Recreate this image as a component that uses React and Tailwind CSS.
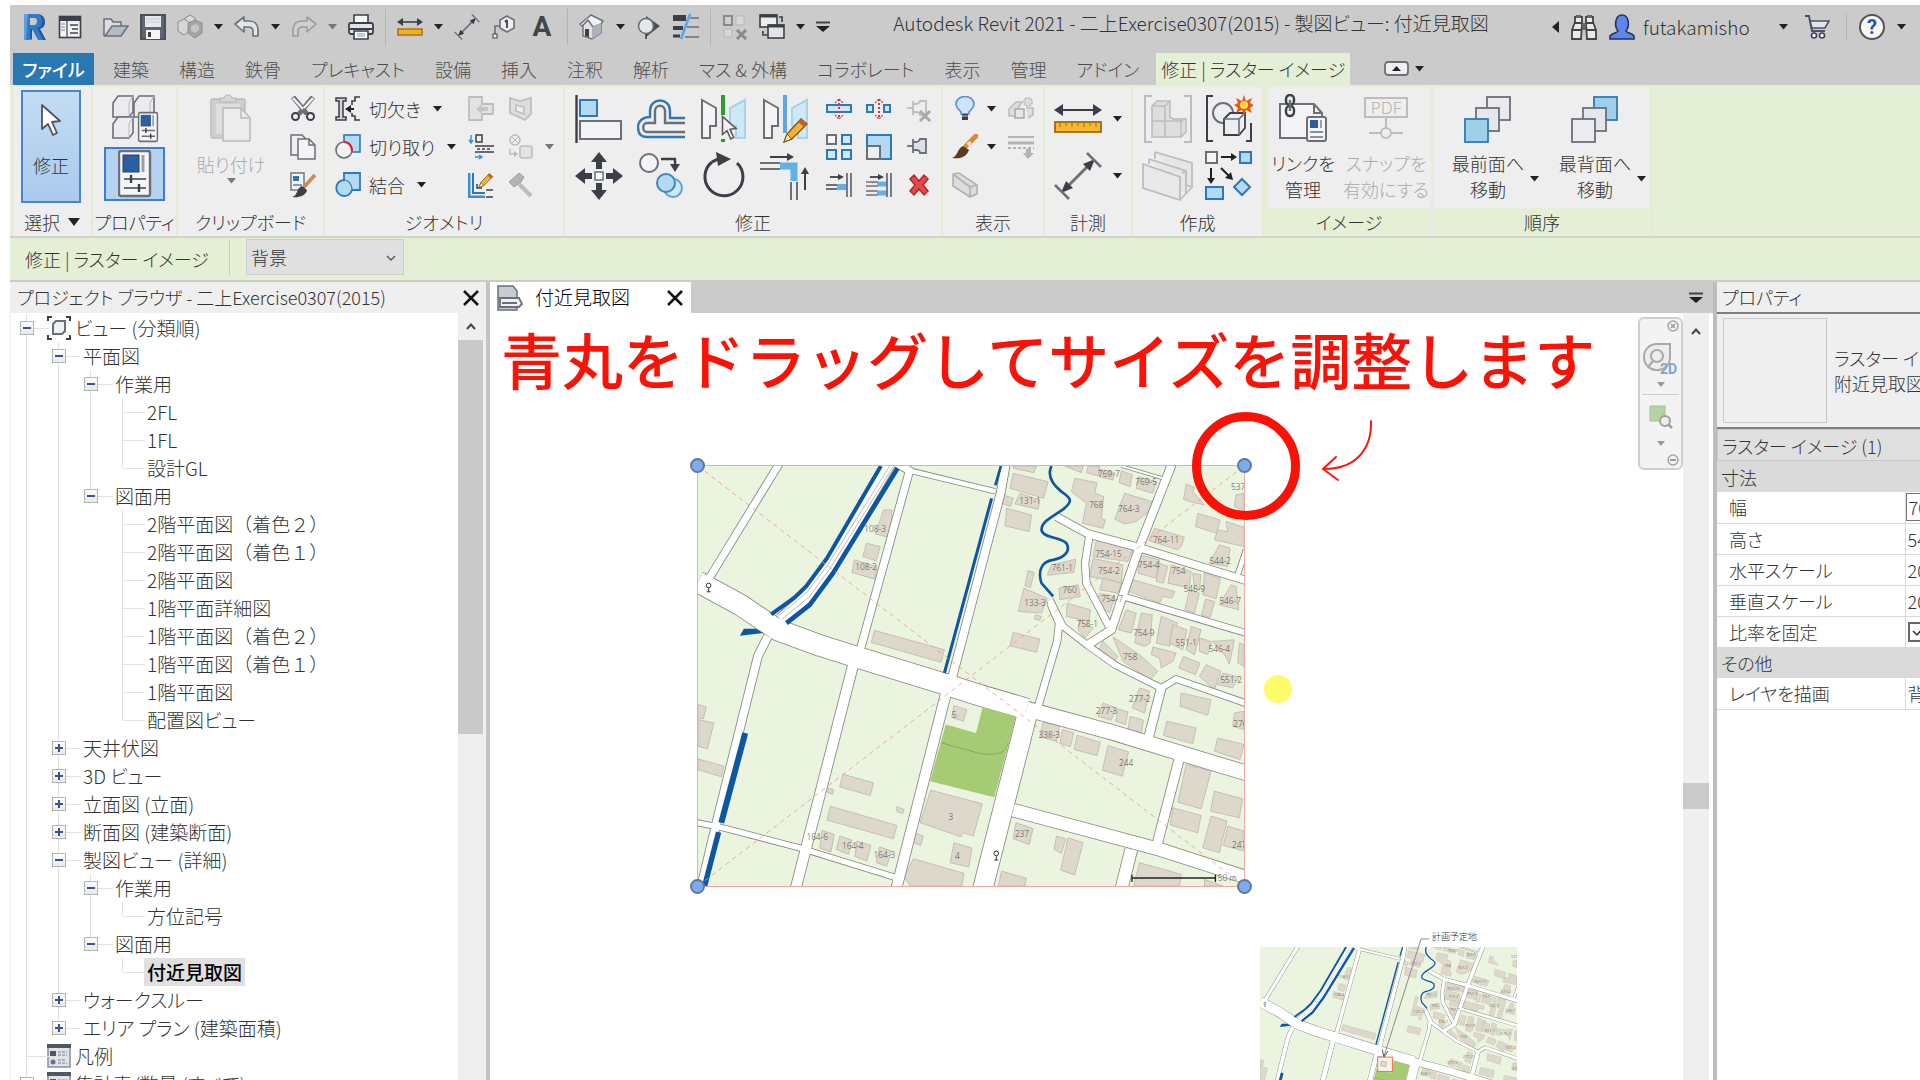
import { useState } from "react";
import clsx from "clsx";

const DARK = "#3b3f48";
const MID = "#6b6f78";
const OFF = "#bdbdbd";
const BLUE = "#2f78b8";
const SKY = "#b3daf2";

function Svg({ w, h, children }){
  return (
      <svg width={w} height={h} viewBox={"0 0 " + w + " " + h} fill="none" className="shrink-0" aria-hidden="true">{children}</svg>
  )
}

function Caret({ off }){
  return <Svg w={9} h={6}><path d="M0 0H9L4.5 5.5Z" fill={off ? "#777" : "#222"} /></Svg>
}

/* ---------- quick access icons ---------- */

function LogoIcon(){
  return (
      <Svg w={24} h={28}>
          <path d="M3 1H13C19 1 22 4 22 9C22 13 20 15 17 16L23 27H16L11 17H9V27L3 24Z" fill="#1d5a9e" />
          <path d="M1 1H12C17 1 19 4 19 8C19 12 17 14 14 15L20 27H15L9 16H7V27H1Z" fill="#2e7cc7" />
          <path d="M7 5H11C13 5 14 6 14 8C14 10 13 12 11 12H7Z" fill="#cbcbcb" />
          <path d="M1 1H5L3 27H1Z" fill="#5aa0dd" />
      </Svg>
  )
}

function WindowIcon(){
  return (
      <Svg w={24} h={24}>
          <rect x="1.5" y="1.5" width="21" height="21" fill="#f2f2f2" stroke={DARK} strokeWidth="1.6" />
          <path d="M1 1H23V6H1Z" fill={DARK} />
          <path d="M9 6V22" stroke={MID} strokeWidth="1.6" />
          <path d="M3 9H7M3 12H7M3 15H7" stroke="#889" strokeWidth="1" />
          <path d="M12 10H20M14 14H20M12 18H20" stroke={MID} strokeWidth="2" />
      </Svg>
  )
}

function OpenIcon(){
  return (
      <Svg w={26} h={22}>
          <path d="M1 20V3H8L10 6H18V10" fill="#dcdde0" stroke={MID} strokeWidth="1.5" />
          <path d="M2 20L9 10H25L18 20Z" fill="#b4bac6" stroke={MID} strokeWidth="1.5" />
      </Svg>
  )
}

function SaveIcon(){
  return (
      <Svg w={26} h={26}>
          <rect x="1" y="1" width="24" height="24" fill="#5f6471" stroke="#4b4f5a" strokeWidth="2" />
          <rect x="5" y="2" width="16" height="11" fill="#e8e9ec" />
          <path d="M6 5H20M6 8H20" stroke="#c5c8ce" />
          <rect x="6" y="16" width="14" height="9" fill="#f5f5f5" />
          <rect x="8" y="18" width="3" height="5" fill={DARK} />
      </Svg>
  )
}

function CubesIcon(){
  return (
      <Svg w={26} h={26}>
          <path d="M8 4L13 1L18 4V9L13 12L8 9Z" fill="#dadada" stroke="#8d8d8d" />
          <path d="M1 8L7 5L13 9V17L7 21L1 17Z" fill="#d6d6d6" stroke="#8d8d8d" />
          <path d="M11 9L18 6L25 9V19L18 24L11 19Z" fill="#a5a5a5" stroke="#8d8d8d" />
          <path d="M14 12L19 10L22 12V16L18 19L14 17Z" fill="#c5c5c5" />
      </Svg>
  )
}

function ArrowBackIcon({ off }){
  return (
      <Svg w={26} h={22}>
          <path d={off
              ? "M25 8L16 1V5H11C5 5 2 9 2 14V20H7V15C7 12 9 11 12 11H16V16Z"
              : "M1 8L10 1V5H15C21 5 24 9 24 14V20H19V15C19 12 17 11 14 11H10V16Z"}
              fill={off ? "#cfcfcf" : "#e4e5e8"} stroke={off ? "#9c9c9c" : MID} strokeWidth="1.6" strokeLinejoin="round" />
      </Svg>
  )
}

function PrintIcon(){
  return (
      <Svg w={26} h={26}>
          <path d="M6 10V1H20V10" fill="#f5f5f5" stroke={DARK} strokeWidth="1.6" />
          <rect x="1" y="9" width="24" height="11" rx="2" fill="#e2e3e6" stroke={DARK} strokeWidth="1.8" />
          <path d="M2 15H24" stroke={DARK} strokeWidth="2" />
          <path d="M6 17H20V25H6Z" fill="#fff" stroke={DARK} strokeWidth="1.6" />
          <path d="M9 20H17M9 22H17" stroke="#6aa0d8" />
      </Svg>
  )
}

function MeasureIcon(){
  return (
      <Svg w={26} h={20}>
          <path d="M3 5H23" stroke={DARK} strokeWidth="1.6" />
          <path d="M0 5L6 1V9ZM26 5L20 1V9Z" fill={DARK} />
          <rect x="1" y="12" width="24" height="6" fill="#f2b01e" stroke="#a87410" strokeWidth="1.5" />
      </Svg>
  )
}

function DimIcon({ w, h }){
  return (
      <svg width={w} height={h} viewBox="0 0 48 48" fill="none" aria-hidden="true">
          <path d="M10 38L38 10" stroke={MID} strokeWidth="3" />
          <path d="M7 41L12 29L19 36ZM41 7L36 19L29 12Z" fill={DARK} />
          <path d="M1 33L15 47M33 1L47 15" stroke={MID} strokeWidth="2.5" />
      </svg>
  )
}

function TagIcon(){
  return (
      <Svg w={26} h={26}>
          <path d="M16 2L23 6V14L16 18L9 14V6Z" fill="#eee" stroke={MID} strokeWidth="1.6" />
          <path d="M16 6V14M14 8L16 6" stroke={DARK} strokeWidth="1.8" />
          <path d="M9 12H4V20" stroke={MID} strokeWidth="1.6" />
          <rect x="2" y="20" width="4" height="4" fill="#eee" stroke={DARK} />
      </Svg>
  )
}

function HomeIcon(){
  return (
      <Svg w={26} h={26}>
          <path d="M4 11V22L13 25L22 19V8L13 2Z" fill="#dfe0e4" stroke={MID} strokeWidth="1.4" />
          <path d="M1 10L12 1L24 7L22 10L14 13L9 6L3 12Z" fill="#f2f2f4" stroke={MID} strokeWidth="1.4" strokeLinejoin="round" />
          <path d="M13 13V25L22 19V9Z" fill="#aeb2bb" />
          <path d="M6 15H10V23L6 22Z" fill={DARK} />
      </Svg>
  )
}

function SectionIcon(){
  return (
      <Svg w={26} h={26}>
          <path d="M10 2L24 12L10 23Z" fill="#4a4e58" />
          <circle cx="10" cy="12" r="7.5" fill="#e6e7e9" stroke={MID} strokeWidth="1.6" />
          <path d="M10 20V25" stroke={DARK} strokeWidth="1.5" />
      </Svg>
  )
}

function ThinLinesIcon(){
  return (
      <Svg w={26} h={26}>
          <path d="M0 4H13" stroke={DARK} strokeWidth="6" />
          <path d="M0 14H10" stroke={DARK} strokeWidth="4" />
          <path d="M0 22H7" stroke={DARK} strokeWidth="3" />
          <path d="M17 4H26M14 13H26M12 23H26" stroke={MID} strokeWidth="1.6" />
          <path d="M17 0L8 25" stroke="#5ca6e6" strokeWidth="2.5" />
      </Svg>
  )
}

function CloseViewsIcon(){
  return (
      <Svg w={26} h={26}>
          <path d="M2 2H10V11H2Z" fill="#cfcfcf" stroke="#8a8a8a" strokeWidth="2" />
          <path d="M14 2H22V11H14ZM2 15H10V23H2Z" fill="#d8d8d8" stroke="#b5b5b5" />
          <path d="M15 16L24 25M24 16L15 25" stroke="#8a8a8a" strokeWidth="3" />
      </Svg>
  )
}

function SwitchViewsIcon(){
  return (
      <Svg w={26} h={26}>
          <rect x="1" y="1" width="17" height="12" fill="#ececec" stroke={DARK} strokeWidth="1.6" />
          <path d="M1 2H18" stroke={DARK} strokeWidth="3" />
          <rect x="9" y="11" width="16" height="13" fill="#e2e3e8" stroke={DARK} strokeWidth="1.6" />
          <path d="M9 12H25" stroke={DARK} strokeWidth="3" />
          <path d="M20 3H23V8M4 17V21H8" stroke={DARK} strokeWidth="1.6" />
      </Svg>
  )
}

function MenuDownIcon(){
  return <Svg w={14} h={12}><path d="M0 1.5H14" stroke="#444" strokeWidth="2" /><path d="M0 5H14L7 11Z" fill="#222" /></Svg>
}

function BinocularsIcon(){
  return (
      <Svg w={26} h={26}>
          <path d="M4 3H11V10L10 25H1V16L4 8Z" fill="#e9e9e9" stroke="#444" strokeWidth="1.8" />
          <path d="M15 3H22V8L25 16V25H16L15 10Z" fill="#e9e9e9" stroke="#444" strokeWidth="1.8" />
          <path d="M5 1H10V4H5ZM16 1H21V4H16ZM11 9H15V16H11Z" fill="#666" />
          <path d="M1 16H10M16 16H25M4 9H11M15 9H22" stroke="#444" strokeWidth="1.8" />
      </Svg>
  )
}

function UserIcon(){
  return (
      <Svg w={26} h={26}>
          <path d="M1 25V22C3 19 8 19 9 17C5 12 6 1 13 1C20 1 21 12 17 17C18 19 23 19 25 22V25Z" fill="#5c86e8" stroke="#25335e" strokeWidth="1.6" />
      </Svg>
  )
}

function CartIcon(){
  return (
      <Svg w={26} h={26}>
          <path d="M1 2H5L8 17H21" stroke="#4c5064" strokeWidth="2" />
          <path d="M6 7H25L21 14H8Z" fill="#e2e4ec" stroke="#4c5064" strokeWidth="1.6" />
          <circle cx="10" cy="21.5" r="2.5" fill="#fff" stroke="#3b3f6b" strokeWidth="1.6" />
          <circle cx="18" cy="21.5" r="2.5" fill="#fff" stroke="#3b3f6b" strokeWidth="1.6" />
      </Svg>
  )
}

/* ---------- ribbon icons ---------- */

function PointerIcon({ w = 22, h = 34 }){
  return (
      <svg width={w} height={h} viewBox="0 0 22 34" fill="none" aria-hidden="true">
          <path d="M2 2V26L8 21L13 32L17 30L12 19L20 18Z" fill="#fff" stroke="#4f5560" strokeWidth="1.8" strokeLinejoin="round" />
      </svg>
  )
}

function Sheet({ x, y, w, h }){
  return (
      <g transform={"translate(" + x + " " + y + ") scale(" + w / 33 + " " + h / 47 + ")"}>
          <rect x="1" y="1" width="31" height="45" rx="2" fill="#f6f6f7" stroke={MID} strokeWidth="2.4" />
          <rect x="5" y="5" width="16" height="17" fill="#2c5f9e" stroke="#23456f" strokeWidth="1" />
          <path d="M25 5V22" stroke="#9aa0aa" strokeWidth="3" />
          <path d="M6 29H28M6 38H28" stroke={MID} strokeWidth="2" />
          <path d="M13 25V33M21 34V42" stroke={DARK} strokeWidth="2.4" />
      </g>
  )
}

function TypePropsIcon(){
  return (
      <Svg w={48} h={48}>
          {[[2, 4], [23, 4], [2, 25]].map(([x, y]) => (
              <g key={x + "-" + y}>
                  <path d={`M${x} ${y + 4}L${x + 5} ${y - 3}H${x + 20}V${y + 13}L${x + 16} ${y + 18}H${x}Z`} fill="#ececef" stroke={MID} strokeWidth="1.6" />
                  <path d={`M${x + 16} ${y + 18}V${y + 4}L${x + 20} ${y - 3}`} stroke="#b8bbc2" />
              </g>
          ))}
          <Sheet x={27} y={17} w={20} h={30} />
      </Svg>
  )
}

function PropsIcon(){
  return <Svg w={34} h={48}><Sheet x={0} y={0} w={33} h={47} /></Svg>
}

function PasteIcon(){
  return (
      <Svg w={42} h={48}>
          <rect x="1" y="5" width="34" height="39" rx="2" fill="#cfcfcf" stroke="#bcbcbc" strokeWidth="1.5" />
          <rect x="6" y="10" width="24" height="30" fill="#dedede" />
          <path d="M10 8V4H14C14 0 22 0 22 4H26V8Z" fill="#d6d6d6" stroke="#b4b4b4" />
          <path d="M13 14H31L40 24V47H13Z" fill="#ececec" stroke="#b9b9b9" strokeWidth="1.5" />
          <path d="M31 14V24H40" stroke="#b9b9b9" strokeWidth="1.5" />
      </Svg>
  )
}

function CutIcon(){
  return (
      <Svg w={26} h={26}>
          <path d="M3 1L17 18M23 1L9 18" stroke={MID} strokeWidth="5" />
          <path d="M3 2L13 13M23 2L14 12" stroke="#f3f3f3" strokeWidth="2.4" />
          <circle cx="5.5" cy="20.5" r="3.5" stroke={DARK} strokeWidth="2" />
          <circle cx="20.5" cy="20.5" r="3.5" stroke={DARK} strokeWidth="2" />
      </Svg>
  )
}

function CopyClipIcon(){
  return (
      <Svg w={26} h={26}>
          <path d="M1 1H12L15 4V21H1Z" fill="#f0f0f0" stroke={MID} strokeWidth="1.5" />
          <path d="M8 5H19L25 11V25H8Z" fill="#f4f4f5" stroke={MID} strokeWidth="1.5" />
          <path d="M19 5V11H25" stroke={MID} strokeWidth="1.5" />
      </Svg>
  )
}

function MatchIcon(){
  return (
      <Svg w={26} h={26}>
          <rect x="1" y="1" width="13" height="17" fill="#f4f4f4" stroke={MID} strokeWidth="1.4" />
          <rect x="3" y="4" width="6" height="5" fill={BLUE} />
          <path d="M3 13H12" stroke={MID} strokeWidth="1.4" />
          <path d="M25 3L14 15" stroke="#c98b4a" strokeWidth="3.5" />
          <path d="M2 25C8 24 6 16 12 14L17 18C16 24 8 26 2 25Z" fill={DARK} />
      </Svg>
  )
}

function CopeIcon(){
  return (
      <Svg w={26} h={26}>
          <path d="M1 2H11V5H8V21H11V24H1V21H4V5H1Z" fill="#d5d6da" stroke={DARK} strokeWidth="1.5" />
          <path d="M25 1H20V5H17V9M17 17V20H20V24H25" stroke={DARK} strokeWidth="1.6" />
          <path d="M10 13L16 9V17Z" fill="#222" /><path d="M15 13H19" stroke="#222" strokeWidth="2" />
      </Svg>
  )
}

function CutGeoIcon(){
  return (
      <Svg w={26} h={26}>
          <rect x="9" y="1" width="16" height="17" fill={SKY} stroke={BLUE} strokeWidth="1.6" />
          <circle cx="9" cy="16" r="8" fill="#f2f2f2" stroke={MID} strokeWidth="1.6" />
          <path d="M9 8C14 8 17 12 17 17" stroke="#e02020" strokeWidth="2" />
      </Svg>
  )
}

function JoinIcon(){
  return (
      <Svg w={26} h={26}>
          <path d="M9 1H25V18H17A8 8 0 1 1 9 8Z" fill={SKY} stroke={BLUE} strokeWidth="1.8" />
          <path d="M9 8C13 8 17 12 17 17" stroke={BLUE} strokeWidth="1.2" />
      </Svg>
  )
}

function BeamJoinIcon(){
  return <Svg w={26} h={26}><path d="M1 1H14V8H25V18H14V24H1Z" fill="#e3e3e3" stroke={OFF} strokeWidth="1.8" /><path d="M8 13L14 8V11H20V15H14V18Z" fill="#c4c4c4" /></Svg>
}

function WallOpeningIcon(){
  return <Svg w={26} h={26}><path d="M2 2L12 5L23 2V18L17 24L2 17Z" fill="#dedede" stroke={OFF} strokeWidth="1.8" /><path d="M8 9L16 11V18L8 15Z" fill="#eee" stroke={OFF} strokeWidth="1.5" /></Svg>
}

function SplitFaceIcon(){
  return (
      <Svg w={26} h={26}>
          <path d="M3 1V8M1 6L3 9L5 6M7 23H13M11 21L14 23L11 25" stroke="#3f8fe0" strokeWidth="1.5" />
          <rect x="8" y="1" width="6" height="7" stroke={DARK} strokeWidth="1.5" />
          <path d="M7 12H26M7 18H26" stroke={DARK} strokeWidth="1.6" />
          <path d="M9 15H24" stroke={DARK} strokeWidth="1.5" strokeDasharray="3 2" />
      </Svg>
  )
}

function PaintOffIcon(){
  return (
      <Svg w={26} h={26}>
          <circle cx="7" cy="6" r="5" stroke={OFF} strokeWidth="1.6" /><path d="M4 3L10 9M10 3L4 9" stroke={OFF} />
          <rect x="12" y="12" width="12" height="12" rx="2" fill="#e3e3e3" stroke={OFF} strokeWidth="1.6" />
          <path d="M2 15V20H8M6 18L9 20L6 22" stroke={OFF} strokeWidth="1.6" />
      </Svg>
  )
}

function Pencil({ x = 0, y = 0, s = 1 }){
  return (
      <g transform={`translate(${x} ${y}) scale(${s})`}>
          <path d="M0 24L3 16L17 1L23 6L8 21Z" fill="#f4b233" stroke="#7a5417" strokeWidth="1.3" />
          <path d="M0 24L3 16L8 21Z" fill="#f3dfbd" stroke="#7a5417" strokeWidth="1" />
          <path d="M14 4L20 9L23 6L17 1Z" fill="#c0602b" />
      </g>
  )
}

function EditProfileIcon(){
  return (
      <Svg w={26} h={26}>
          <path d="M1 1V25H17" stroke="#3f8fd0" strokeWidth="3" />
          <path d="M5 1V21H17" stroke={BLUE} strokeWidth="2" />
          <path d="M9 12V16H14M18 18H25M18 25H25" stroke={DARK} strokeWidth="1.5" />
          <Pencil x={11} y={1} s={0.6} />
      </Svg>
  )
}

function HammerOffIcon(){
  return <Svg w={26} h={26}><path d="M1 10L11 1L16 5L13 10L6 15Z" fill="#b5b5b5" stroke="#9e9e9e" /><path d="M11 12L23 24" stroke={OFF} strokeWidth="4" /></Svg>
}

function AlignIcon(){
  return (
      <Svg w={48} h={48}>
          <path d="M1.5 0V48" stroke={DARK} strokeWidth="2.4" />
          <rect x="5" y="5" width="17" height="16" fill={SKY} stroke={BLUE} strokeWidth="2" />
          <rect x="5" y="26" width="41" height="18" fill="#f4f4f6" stroke={MID} strokeWidth="2" />
      </Svg>
  )
}

function OffsetIcon(){
  return (
      <Svg w={48} h={48}>
          <path d="M48 23H33V16C33 2 13 2 13 16V22C6 22 1 26 1 32C1 38 4 42 10 42H48" stroke={BLUE} strokeWidth="2.4" />
          <path d="M48 28H28V16C28 9 18 9 18 16V28H10C5 28 5 37 10 37H48" stroke={MID} strokeWidth="2.4" fill="#f2f2f2" />
      </Svg>
  )
}

function MirrorIcon({ draw }){
  return (
      <Svg w={48} h={48}>
          <path d="M3 5L17 13V31H11V43H3Z" fill="#f4f4f6" stroke={MID} strokeWidth="2" />
          <path d="M46 5L31 13V31H37V43H46Z" fill="#cfe8f5" stroke="#a9d2ea" strokeWidth="2" />
          {draw
              ? <><path d="M24 0V38" stroke="#5ca6e6" strokeWidth="4" /><Pencil x={23} y={23} /></>
              : <><path d="M24 0V20M24 44V47" stroke="#2f9a2f" strokeWidth="4" /><g transform="translate(22 20) scale(0.75)"><path d="M2 2V26L8 21L13 32L17 30L12 19L20 18Z" fill="#f0f0f0" stroke="#555" strokeWidth="2" /></g></>}
      </Svg>
  )
}

function MoveIcon(){
  return (
      <Svg w={48} h={48}>
          <path d="M24 0L32 10H27V17H21V10H16ZM24 48L32 38H27V31H21V38H16ZM0 24L10 16V21H17V27H10V32ZM48 24L38 16V21H31V27H38V32Z" fill={DARK} />
          <rect x="20" y="20" width="8" height="8" fill="#fff" stroke={MID} strokeWidth="1.5" />
      </Svg>
  )
}

function CopyObjIcon(){
  return (
      <Svg w={48} h={48}>
          <circle cx="12" cy="11" r="9" fill="#f4f4f6" stroke={MID} strokeWidth="2" />
          <path d="M24 7H38V12" stroke={DARK} strokeWidth="2.4" /><path d="M33 12H43L38 20Z" fill={DARK} />
          <circle cx="36" cy="36" r="9" fill="#cfe8f7" stroke="#5ea2d2" strokeWidth="2" />
          <circle cx="29" cy="31" r="9" fill={SKY} stroke="#3f85bb" strokeWidth="2" />
      </Svg>
  )
}

function RotateIcon(){
  return (
      <Svg w={48} h={48}>
          <path d="M13 10A19 19 0 1 0 38 11" stroke={DARK} strokeWidth="3" />
          <path d="M13 10C16 8 19 7 22 7" stroke={DARK} strokeWidth="3" />
          <path d="M17 0L32 7L19 14Z" fill={DARK} />
      </Svg>
  )
}

function TrimIcon(){
  return (
      <Svg w={50} h={48}>
          <path d="M10 5H30" stroke={DARK} strokeWidth="2" /><path d="M27 1L34 5L27 9Z" fill={DARK} />
          <path d="M0 11H20M0 17H20M31 30V48M37 30V48" stroke={MID} strokeWidth="2" />
          <path d="M20 14H34V29" stroke="#62b0ea" strokeWidth="7" />
          <path d="M45 38V18" stroke={DARK} strokeWidth="2" /><path d="M41 22L45 15L49 22Z" fill={DARK} />
      </Svg>
  )
}

function SplitIcon({ gap }){
  return (
      <Svg w={26} h={26}>
          {gap
              ? <path d="M1 9H7V16H1ZM18 9H24V16H18Z" fill="#cfe8f7" stroke={BLUE} strokeWidth="2" />
              : <path d="M1 9H25V16H1Z" fill="#cfe8f7" stroke={BLUE} strokeWidth="2" />}
          <path d="M13 3V23" stroke="#cf3a3a" strokeWidth="2" strokeDasharray="2 2" />
          <path d="M9 7L13 3L17 7M9 19L13 23L17 19" stroke="#cf3a3a" strokeWidth="1.2" strokeDasharray="2 1" />
      </Svg>
  )
}

function PinIcon({ off }){
  var c = off ? OFF : MID;
  return (
      <Svg w={26} h={26}>
          <path d="M1 12H7" stroke={c} strokeWidth="1.8" />
          <path d="M7 5V19M7 8H10C12 8 14 6 14 5H20V19H14C14 17 12 16 10 16H7" fill={off ? "#eee" : "#e0e1e4"} stroke={c} strokeWidth="1.8" />
          {off && <path d="M14 15L24 25M24 15L14 25" stroke="#a8a8a8" strokeWidth="3" />}
      </Svg>
  )
}

function ArrayIcon(){
  return (
      <Svg w={26} h={26}>
          <rect x="1" y="1" width="9" height="9" fill="#f4f4f4" stroke={MID} strokeWidth="2" />
          <path d="M16 1H25V10H16ZM1 16H10V25H1ZM16 16H25V25H16Z" fill="#cfe8f7" stroke={BLUE} strokeWidth="2" />
      </Svg>
  )
}

function ScaleIcon(){
  return (
      <Svg w={26} h={26}>
          <rect x="1" y="1" width="24" height="24" fill={SKY} stroke={BLUE} strokeWidth="2" />
          <rect x="1" y="12" width="13" height="13" fill="#eee" stroke={MID} strokeWidth="2" />
      </Svg>
  )
}

function ExtendIcon({ multi }){
  return (
      <Svg w={26} h={26}>
          <path d="M4 5H14" stroke={DARK} strokeWidth="1.8" /><path d="M12 2L18 5L12 8Z" fill={DARK} />
          {multi
              ? <><path d="M0 10H12M0 14H12M0 19H12M0 23H12" stroke={MID} strokeWidth="1.6" /><path d="M11 12H21M11 21H21" stroke="#62b0ea" strokeWidth="5" /></>
              : <><path d="M0 13H12M0 17H12" stroke={MID} strokeWidth="1.8" /><path d="M11 15H21" stroke="#62b0ea" strokeWidth="6" /></>}
          <path d="M21 1V25M25 1V25" stroke={MID} strokeWidth="1.8" />
      </Svg>
  )
}

function DeleteIcon(){
  return <Svg w={26} h={26}><path d="M4 7L8 3L13 9L18 3L22 7L17 13L22 19L18 23L13 17L8 23L4 19L9 13Z" fill="#e5484d" stroke="#b3262b" strokeWidth="1.5" /></Svg>
}

function BulbIcon(){
  return (
      <Svg w={26} h={26}>
          <path d="M9 16C6 13 4 11 4 8A9 7.500 0 0 1 22 8C22 11 20 13 17 16V18H9Z" fill="#cfe3fb" stroke="#5b8fd0" strokeWidth="1.6" />
          <path d="M10 18H16V24H10Z" fill={DARK} /><path d="M10 20H16" stroke="#bbb" />
      </Svg>
  )
}

function BrushIcon(){
  return (
      <Svg w={26} h={26}>
          <path d="M24 2L14 12" stroke="#d98a3d" strokeWidth="5" strokeLinecap="round" />
          <path d="M16 8L19 12" stroke="#ddd" strokeWidth="4" />
          <path d="M0 24C6 22 5 15 11 12L17 16C14 24 7 25 0 24Z" fill="#5d3a22" />
      </Svg>
  )
}

function BoxOffIcon(){
  return <Svg w={28} h={26}><path d="M2 2L8 1L26 13V22L19 25L2 14ZM2 2L19 15V25M19 15L26 13" fill="#dcdcdc" stroke="#b2b2b2" strokeWidth="1.6" /></Svg>
}

function DisplaceOffIcon(){
  return (
      <Svg w={26} h={26}>
          <circle cx="20" cy="6" r="4" fill="#ddd" stroke={OFF} strokeWidth="2" strokeDasharray="2 1" />
          <path d="M1 13L8 6H14L10 12V20H1ZM18 12H25V19L20 22" fill="#ddd" stroke={OFF} strokeWidth="1.6" />
          <rect x="7" y="13" width="9" height="9" fill="#e6e6e6" stroke="#acacac" strokeWidth="1.6" />
      </Svg>
  )
}

function LineworkOffIcon(){
  return (
      <Svg w={26} h={26}>
          <path d="M0 3H26" stroke="#b4b4b4" strokeWidth="2" /><path d="M0 9H26" stroke="#b4b4b4" strokeWidth="3" />
          <path d="M0 14H26" stroke="#b4b4b4" strokeWidth="2" strokeDasharray="3 2" />
          <path d="M18 15H23V19H26L20 25L15 19H18Z" fill="#b4b4b4" />
      </Svg>
  )
}

function RulerIcon(){
  return (
      <Svg w={48} h={30}>
          <path d="M6 6H42" stroke={DARK} strokeWidth="2" />
          <path d="M0 6L9 0V12ZM48 6L39 0V12Z" fill={DARK} />
          <rect x="1" y="18" width="46" height="10" fill="#f7b92b" stroke="#9c6b10" strokeWidth="1.8" />
          <path d="M6 19V23M12 19V22M18 19V23M24 19V22M30 19V23M36 19V22M42 19V23" stroke="#9c6b10" />
      </Svg>
  )
}

function GroupOffIcon(){
  return (
      <Svg w={48} h={48}>
          <path d="M8 1H1V47H8M40 1H47V47H40" stroke={OFF} strokeWidth="2" />
          <path d="M8 11L13 6H26V22L29 24H42V37L37 42H8Z" fill="#dedede" stroke={OFF} strokeWidth="1.6" />
          <path d="M8 11H21V42M21 11L26 6M8 26H37V42M37 26L42 23" stroke={OFF} strokeWidth="1.6" />
      </Svg>
  )
}

function CreateGroupIcon(){
  return (
      <Svg w={48} h={48}>
          <path d="M8 1H2V46H8M41 46H46V28" stroke={DARK} strokeWidth="2" />
          <circle cx="18" cy="18" r="10" fill="#eceef2" stroke={MID} strokeWidth="2" />
          <path d="M19 24L25 18H40V33L34 40H19Z" fill="#eceef2" stroke={DARK} strokeWidth="1.8" />
          <path d="M19 24H34V40M34 24L40 18" stroke={MID} strokeWidth="1.6" />
          <path d="M39 0L41 6L47 3L45 8L49 10L45 13L47 18L41 15L39 20L37 15L31 18L33 13L29 10L33 8L31 3L37 6Z" fill="#e5591b" />
          <circle cx="39" cy="10" r="4" fill="#ffd84a" />
      </Svg>
  )
}

function AssemblyOffIcon(){
  return (
      <Svg w={52} h={50}>
          <path d="M13 1L50 12V36L44 34M7 8L44 20V43" fill="#e6e6e6" stroke={OFF} strokeWidth="1.8" />
          <path d="M13 1V8M7 8V13M44 20L40 22" stroke={OFF} strokeWidth="1.8" />
          <path d="M1 13L38 26V49L1 37Z" fill="#e9e9e9" stroke={OFF} strokeWidth="1.8" />
          <path d="M38 49L50 36" stroke={OFF} strokeWidth="1.8" />
      </Svg>
  )
}

function SimilarIcon(){
  return (
      <Svg w={48} h={50}>
          <rect x="1" y="1" width="11" height="11" fill="#f4f4f4" stroke={MID} strokeWidth="2" />
          <rect x="35" y="1" width="11" height="11" fill={SKY} stroke={BLUE} strokeWidth="2" />
          <rect x="1" y="36" width="17" height="12" fill={SKY} stroke={BLUE} strokeWidth="2" />
          <path d="M37 28L45 36L37 44L29 36Z" fill={SKY} stroke={BLUE} strokeWidth="2" />
          <path d="M16 6H27M6 17V28M16 17L24 25" stroke="#222" strokeWidth="2" />
          <path d="M26 2L32 6L26 10ZM2 27L6 33L10 27ZM28 29L26 21L20 27Z" fill="#222" />
      </Svg>
  )
}

function LinkIcon(){
  return (
      <Svg w={48} h={48}>
          <path d="M1 10H35L43 19V44H1Z" fill="#f4f4f6" stroke={MID} strokeWidth="2" />
          <path d="M35 10V19H43" stroke={MID} strokeWidth="2" />
          <rect x="7" y="1" width="8" height="10" rx="4" stroke={DARK} strokeWidth="2.4" />
          <rect x="7" y="12" width="8" height="10" rx="4" stroke={DARK} strokeWidth="2.4" />
          <path d="M11 6V17" stroke={MID} strokeWidth="2.4" />
          <rect x="28" y="23" width="19" height="24" rx="2" fill="#f6f6f7" stroke={MID} strokeWidth="2" />
          <rect x="31" y="26" width="8" height="8" fill="#2c5f9e" /><path d="M42 26V34" stroke="#9aa0aa" strokeWidth="2" />
          <path d="M31 38H44M31 43H44" stroke={MID} strokeWidth="1.4" />
      </Svg>
  )
}

function PdfIcon(){
  return (
      <Svg w={44} h={46}>
          <rect x="1" y="4" width="42" height="19" stroke={OFF} strokeWidth="2" />
          <text x="22" y="20" textAnchor="middle" fontSize="17" fill="#b3b3b3" fontFamily="Noto Sans">PDF</text>
          <path d="M22 23V34M5 39H17M27 39H39" stroke={OFF} strokeWidth="2" />
          <circle cx="22" cy="39" r="5" stroke={OFF} strokeWidth="2" />
      </Svg>
  )
}

function OrderIcon({ front }){
  return (
      <Svg w={48} h={48}>
          <rect x="23" y="1" width="23" height="23" fill={front ? "#e9e9ee" : "#9fd0ea"} stroke={front ? MID : BLUE} strokeWidth="1.8" />
          <rect x="12" y="12" width="23" height="23" fill="#e6e7ed" stroke={MID} strokeWidth="1.8" />
          <rect x="1" y="23" width="23" height="23" fill={front ? "#9fd0ea" : "#ebebf0"} stroke={front ? BLUE : MID} strokeWidth="1.8" />
      </Svg>
  )
}

/* ---------- title bar ---------- */

function Tool({ label, className, children }){
  return <button type="button" aria-label={label} className={clsx("flex shrink-0 items-center justify-center", className)}>{children}</button>
}

function Rule(){
  return <span className="h-9 w-px shrink-0 bg-[#b4b4b4]" />
}

function TitleBar(){
  return (
      <header className="flex h-12 items-center bg-[#cbcbcb] pr-[14px] pb-1 pl-[13px]">
          <div className="flex items-center gap-[11px]">
              <Tool label="Revit"><LogoIcon /></Tool>
              <Tool label="ホーム"><WindowIcon /></Tool>
              <Tool label="開く" className="ml-[10px]"><OpenIcon /></Tool>
              <Tool label="上書き保存"><SaveIcon /></Tool>
              <Tool label="同期"><CubesIcon /></Tool>
              <Tool label="同期メニュー"><Caret /></Tool>
              <Tool label="元に戻す"><ArrowBackIcon /></Tool>
              <Tool label="元に戻すメニュー"><Caret /></Tool>
              <Tool label="やり直し"><ArrowBackIcon off /></Tool>
              <Tool label="やり直しメニュー"><Caret off /></Tool>
              <Tool label="印刷"><PrintIcon /></Tool>
              <Rule />
              <Tool label="計測"><MeasureIcon /></Tool>
              <Tool label="計測メニュー"><Caret /></Tool>
              <Tool label="平行寸法"><DimIcon w={26} h={26} /></Tool>
              <Tool label="タグ"><TagIcon /></Tool>
              <Tool label="文字" className="w-7 font-[Roboto] text-[28px] leading-7 font-bold text-[#42454d]">A</Tool>
              <Rule />
              <Tool label="既定の3Dビュー"><HomeIcon /></Tool>
              <Tool label="3Dビューメニュー"><Caret /></Tool>
              <Tool label="断面"><SectionIcon /></Tool>
              <Tool label="細線"><ThinLinesIcon /></Tool>
              <Rule />
              <Tool label="非アクティブなビューを閉じる"><CloseViewsIcon /></Tool>
              <Tool label="ウィンドウを切り替え"><SwitchViewsIcon /></Tool>
              <Tool label="ウィンドウメニュー"><Caret /></Tool>
              <Tool label="カスタマイズ"><MenuDownIcon /></Tool>
          </div>
          <h1 className="flex-1 pb-2 text-center text-[19px] leading-6 whitespace-nowrap">Autodesk Revit 2021 - 二上Exercise0307(2015) - 製図ビュー: 付近見取図</h1>
          <div className="flex items-center">
              <Tool label="検索を閉じる"><Svg w={7} h={12}><path d="M7 0V12L0 6Z" fill="#222" /></Svg></Tool>
              <Tool label="検索" className="ml-3"><BinocularsIcon /></Tool>
              <button type="button" className="ml-3 flex items-center gap-2">
                  <UserIcon />
                  <span className="w-32 text-left text-[19px] leading-6">futakamisho</span>
                  <Caret />
              </button>
              <Tool label="App Store" className="ml-4"><CartIcon /></Tool>
              <span className="ml-4 h-7 w-px bg-[#b4b4b4]" />
              <Tool label="ヘルプ" className="ml-3 h-[26px] w-[26px] rounded-full border-2 border-[#555] bg-[#f6f6f6] font-[Roboto] text-[20px] leading-5 font-bold text-[#2450c8]">?</Tool>
              <Tool label="ヘルプメニュー" className="ml-3"><Caret /></Tool>
          </div>
      </header>
  )
}

const TABS = ["建築", "構造", "鉄骨", "プレキャスト", "設備", "挿入", "注釈", "解析", "マス & 外構", "コラボレート", "表示", "管理", "アドイン"];

function Tabs(){
  return (
      <nav className="flex h-8 items-stretch bg-[#cbcbcb] pl-[3px] text-[18px] leading-8">
          <button type="button" className="mr-1 w-[81px] bg-[#2878b4] font-medium text-white">ファイル</button>
          {TABS.map(t => <button key={t} type="button" className="px-[15px] whitespace-nowrap text-[#4d4d4d]">{t}</button>)}
          <button type="button" aria-current="page" className="ml-[2px] w-[194px] bg-[#e4efd6] whitespace-nowrap">修正 | ラスター イメージ</button>
          <Tool label="リボンを最小化" className="ml-[34px] gap-[6px]">
              <Svg w={25} h={16}><rect x="1" y="1" width="23" height="13" rx="3" fill="#f1f1f4" stroke={MID} strokeWidth="1.8" /><path d="M8 10L12.5 5L17 10Z" fill="#222" /></Svg>
              <Caret />
          </Tool>
      </nav>
  )
}

/* ---------- ribbon ---------- */

function Panel({ label, green, className, children }){
  return (
      <section className={clsx("flex shrink-0 flex-col border-r-2 border-[#e2ecd4] bg-[#eeeeee]", className)}>
          <div className="flex h-[121px] pt-[3px]">{children}</div>
          <div className={clsx("flex h-7 items-center justify-center gap-2 whitespace-nowrap text-[18px] leading-6", green && "bg-[#e4efd6]")}>{label}</div>
      </section>
  )
}

function Col({ className, children }){
  return <div className={clsx("flex shrink-0 flex-col", className)}>{children}</div>
}

function Small({ label, children }){
  return <Tool label={label} className="h-[38px] w-full">{children}</Tool>
}

function Big({ label, children }){
  return <Tool label={label} className="h-[57px] w-full">{children}</Tool>
}

function GeoRow({ icon, label }){
  return (
      <button type="button" className="flex h-[38px] items-center gap-2">
          {icon}
          <span className="mr-1 whitespace-nowrap text-[18px]">{label}</span>
          <Caret />
      </button>
  )
}

function Ribbon(){
  return (
      <div className="flex h-[153px] border-t-2 border-b-2 border-t-[#e4efd6] border-b-[#cfd4ca] bg-[#e4efd6] pl-[3px]">
          <Panel className="w-20" label={<>選択 <Svg w={12} h={8}><path d="M0 0H12L6 8Z" fill="#222" /></Svg></>}>
              <button type="button" className="ml-2 flex h-[113px] w-[60px] flex-col items-center border-2 border-[#4a84cc] bg-linear-to-b from-[#c3dcf4] to-[#a9cbec] pt-[11px] text-[18px] leading-6">
                  <PointerIcon />
                  <span className="mt-4">修正</span>
              </button>
          </Panel>
          <Panel className="w-[85px]" label="プロパティ">
              <Col className="w-full items-center">
                  <Big label="タイプ プロパティ"><TypePropsIcon /></Big>
                  <Tool label="プロパティ" className="h-[54px] w-[61px] border-2 border-[#3f7ccb] bg-[#b5d3f0]"><PropsIcon /></Tool>
              </Col>
          </Panel>
          <Panel className="w-[147px]" label="クリップボード">
              <button type="button" disabled className="flex w-[106px] flex-col items-center pt-1 text-[18px] leading-7 text-[#a9a9a9]">
                  <PasteIcon />
                  <span className="mt-2">貼り付け</span>
                  <Caret off />
              </button>
              <Col className="w-[38px]">
                  <Small label="切り取り"><CutIcon /></Small>
                  <Small label="コピー"><CopyClipIcon /></Small>
                  <Small label="タイプ プロパティを一致"><MatchIcon /></Small>
              </Col>
          </Panel>
          <Panel className="w-[240px]" label="ジオメトリ">
              <Col className="ml-[10px] w-[126px] items-start">
                  <GeoRow icon={<CopeIcon />} label="切欠き" />
                  <GeoRow icon={<CutGeoIcon />} label="切り取り" />
                  <GeoRow icon={<JoinIcon />} label="結合" />
              </Col>
              <Col className="w-10">
                  <Small label="梁/柱 結合"><BeamJoinIcon /></Small>
                  <Small label="壁結合"><SplitFaceIcon /></Small>
                  <Small label="面を分割"><EditProfileIcon /></Small>
              </Col>
              <Col className="w-10">
                  <Small label="壁の開口"><WallOpeningIcon /></Small>
                  <Small label="ペイント"><PaintOffIcon /></Small>
                  <Small label="解体"><HammerOffIcon /></Small>
              </Col>
              <Col className="w-4 pt-[38px]"><Small label="ペイントメニュー"><Caret off /></Small></Col>
          </Panel>
          <Panel className="w-[378px]" label="修正">
              <Col className="ml-[3px] w-[62px]"><Big label="位置合わせ"><AlignIcon /></Big><Big label="移動"><MoveIcon /></Big></Col>
              <Col className="w-[62px]"><Big label="オフセット"><OffsetIcon /></Big><Big label="コピー"><CopyObjIcon /></Big></Col>
              <Col className="w-[62px]"><Big label="鏡像化 - 軸を選択"><MirrorIcon /></Big><Big label="回転"><RotateIcon /></Big></Col>
              <Col className="w-[62px]"><Big label="鏡像化 - 軸を描画"><MirrorIcon draw /></Big><Big label="コーナーへトリム"><TrimIcon /></Big></Col>
              <Col className="ml-[3px] w-10">
                  <Small label="要素を分割"><SplitIcon /></Small>
                  <Small label="配列"><ArrayIcon /></Small>
                  <Small label="単一要素をトリム"><ExtendIcon /></Small>
              </Col>
              <Col className="w-10">
                  <Small label="ギャップで分割"><SplitIcon gap /></Small>
                  <Small label="尺度"><ScaleIcon /></Small>
                  <Small label="複数要素をトリム"><ExtendIcon multi /></Small>
              </Col>
              <Col className="w-10">
                  <Small label="ピン解除"><PinIcon off /></Small>
                  <Small label="ピン"><PinIcon /></Small>
                  <Small label="削除"><DeleteIcon /></Small>
              </Col>
          </Panel>
          <Panel className="w-[102px]" label="表示">
              <Col className="w-11">
                  <Small label="非表示"><BulbIcon /></Small>
                  <Small label="グラフィックスを上書き"><BrushIcon /></Small>
                  <Small label="選択ボックス"><BoxOffIcon /></Small>
              </Col>
              <Col className="w-2">
                  <Small label="非表示メニュー"><Caret /></Small>
                  <Small label="上書きメニュー"><Caret /></Small>
              </Col>
              <Col className="ml-1 w-11">
                  <Small label="要素を移動"><DisplaceOffIcon /></Small>
                  <Small label="線種変更"><LineworkOffIcon /></Small>
              </Col>
          </Panel>
          <Panel className="w-[88px]" label="計測">
              <Col className="ml-1 w-[58px]"><Big label="2点間を計測"><RulerIcon /></Big><Big label="寸法"><DimIcon w={48} h={48} /></Big></Col>
              <Col className="w-5"><Big label="計測メニュー"><Caret /></Big><Big label="寸法メニュー"><Caret /></Big></Col>
          </Panel>
          <Panel className="mr-1 w-[131px]" label="作成">
              <Col className="ml-1 w-[61px]"><Big label="アセンブリを作成"><GroupOffIcon /></Big><Big label="パーツを作成"><AssemblyOffIcon /></Big></Col>
              <Col className="w-[61px]"><Big label="グループを作成"><CreateGroupIcon /></Big><Big label="類似オブジェクトを作成"><SimilarIcon /></Big></Col>
          </Panel>
          <Panel green className="w-[166px] border-r-4 border-r-[#e9ede3]" label="イメージ">
              <button type="button" className="flex w-[70px] flex-col items-center pt-1 text-[18px] leading-[26px]">
                  <span className="mb-2"><LinkIcon /></span>
                  <span className="whitespace-nowrap">リンクを</span><span>管理</span>
              </button>
              <button type="button" disabled className="ml-1 flex w-[88px] flex-col items-center pt-1 text-[18px] leading-[26px] text-[#ababab]">
                  <span className="mb-[10px]"><PdfIcon /></span>
                  <span className="whitespace-nowrap">スナップを</span><span className="whitespace-nowrap">有効にする</span>
              </button>
          </Panel>
          <Panel green className="w-[218px]" label="順序">
              {[["最前面へ", true], ["最背面へ", false]].map(([t, front]) => (
                  <button key={t} type="button" className="ml-3 flex w-[95px] items-center">
                      <span className="flex w-[84px] flex-col items-center text-[18px] leading-[26px]">
                          <span className="mb-[6px]"><OrderIcon front={front} /></span>
                          <span className="whitespace-nowrap">{t}</span><span>移動</span>
                      </span>
                      <span className="pt-[60px]"><Caret /></span>
                  </button>
              ))}
          </Panel>
      </div>
  )
}

function OptionsBar(){
  return (
      <div className="flex h-[44px] items-start border-b-2 border-[#c9cdc2] bg-[#e4efd6] pt-px pl-[15px] text-[18px]">
          <label htmlFor="layer" className="flex h-9 w-[205px] items-center border-r border-[#c5cdb9] pt-1 whitespace-nowrap">修正 | ラスター イメージ</label>
          <div className="relative ml-4">
              <select id="layer" className="h-9 w-[158px] appearance-none border border-[#cfcfcf] bg-[#e0e0e0] px-1 outline-none">
                  <option>背景</option>
                  <option>前景</option>
              </select>
              <span className="pointer-events-none absolute top-4 right-2"><Svg w={10} h={7}><path d="M1 1L5 5L9 1" stroke="#555" strokeWidth="1.4" /></Svg></span>
          </div>
      </div>
  )
}

/* ---------- project browser ---------- */

// kind: "+" / "-" for branches, "" for leaves; guides lists the columns with a running line
const TREE = [
  { lv:0, kind:"-", text:"ビュー (分類順)", icon:"view", guides:[] },
  { lv:1, kind:"-", text:"平面図", guides:[0] },
  { lv:2, kind:"-", text:"作業用", guides:[0,1] },
  { lv:3, kind:"", text:"2FL", guides:[0,1,2] },
  { lv:3, kind:"", text:"1FL", guides:[0,1,2] },
  { lv:3, kind:"", text:"設計GL", guides:[0,1,2], last:true },
  { lv:2, kind:"-", text:"図面用", guides:[0,1], last:true },
  { lv:3, kind:"", text:"2階平面図（着色２）", guides:[0,1] },
  { lv:3, kind:"", text:"2階平面図（着色１）", guides:[0,1] },
  { lv:3, kind:"", text:"2階平面図", guides:[0,1] },
  { lv:3, kind:"", text:"1階平面詳細図", guides:[0,1] },
  { lv:3, kind:"", text:"1階平面図（着色２）", guides:[0,1] },
  { lv:3, kind:"", text:"1階平面図（着色１）", guides:[0,1] },
  { lv:3, kind:"", text:"1階平面図", guides:[0,1] },
  { lv:3, kind:"", text:"配置図ビュー", guides:[0,1], last:true },
  { lv:1, kind:"+", text:"天井伏図", guides:[0] },
  { lv:1, kind:"+", text:"3D ビュー", guides:[0] },
  { lv:1, kind:"+", text:"立面図 (立面)", guides:[0] },
  { lv:1, kind:"+", text:"断面図 (建築断面)", guides:[0] },
  { lv:1, kind:"-", text:"製図ビュー (詳細)", guides:[0] },
  { lv:2, kind:"-", text:"作業用", guides:[0,1] },
  { lv:3, kind:"", text:"方位記号", guides:[0,1,2], last:true },
  { lv:2, kind:"-", text:"図面用", guides:[0,1], last:true },
  { lv:3, kind:"", text:"付近見取図", guides:[0,1], last:true, active:true },
  { lv:1, kind:"+", text:"ウォークスルー", guides:[0] },
  { lv:1, kind:"+", text:"エリア プラン (建築面積)", guides:[0], last:true },
  { lv:0, kind:"", text:"凡例", icon:"legend", guides:[] },
  { lv:0, kind:"+", text:"集計表/数量 (すべて)", icon:"legend", guides:[] },
];

function TreeIcon({ kind }){
  if(kind == "view"){
      return (
          <Svg w={24} h={24}>
              <path d="M1 5V1H5M19 1H23V5M23 19V23H19M5 23H1V19" stroke={DARK} strokeWidth="2" />
              <path d="M6 8L9 5H18V15L15 18H6Z" fill="#eef1f5" stroke={MID} strokeWidth="2" />
          </Svg>
      )
  }
  return (
      <Svg w={24} h={24}>
          <rect x="1" y="1" width="22" height="22" fill="#dfe2e7" stroke="#8a8e98" strokeWidth="1.5" />
          <path d="M0 2H24" stroke="#4f5664" strokeWidth="4" />
          <rect x="3" y="7" width="6" height="5" fill="#4f5664" /><circle cx="6" cy="18" r="2.5" fill="#6b7280" />
          <path d="M11 8H20M11 11H20M11 16H18M11 19H20" stroke="#9aa0ab" strokeWidth="1.5" strokeDasharray="3 1" />
      </Svg>
  )
}

function TreeRow({ row }){
  var cells = [];
  for(let i = 0; i < row.lv; i++){
      cells.push(
          <span key={i} className="flex w-8 shrink-0">
              <span className={clsx("w-4 border-r", row.guides.includes(i) ? "border-[#e2e2e2]" : "border-transparent")} />
          </span>
      );
  }
  return (
      <li className="flex h-7 items-stretch whitespace-nowrap">
          {cells}
          <span className="relative w-8 shrink-0">
              <span className={clsx("absolute top-0 left-[15px] w-px bg-[#e2e2e2]", row.last ? "h-1/2" : "h-full")} />
              <span className="absolute top-1/2 left-4 h-px w-[22px] bg-[#e2e2e2]" />
              {row.kind && (
                  <button type="button" aria-label={row.kind == "+" ? "展開" : "折りたたむ"} className="absolute top-[7px] left-[9px] flex h-[14px] w-[14px] items-center justify-center border border-[#b3b3b3] bg-linear-to-b from-white to-[#e9e9e9]">
                      <Svg w={8} h={8}><path d={row.kind == "+" ? "M0 4H8M4 0V8" : "M0 4H8"} stroke="#3a4fa0" strokeWidth="2" /></Svg>
                  </button>
              )}
          </span>
          {row.icon && <span className="ml-1 flex items-center"><TreeIcon kind={row.icon} /></span>}
          <a href="#" className={clsx("px-[3px] text-[19px] leading-7",
              row.icon ? "ml-px" : "ml-[5px]",
              row.active && "bg-[#e0e0e0] font-medium text-black",
              row.text.includes("（") && "[font-feature-settings:normal]")}>{row.text}</a>
      </li>
  )
}

function CloseX(){
  return <Svg w={16} h={16}><path d="M1 1L15 15M15 1L1 15" stroke="#111" strokeWidth="2.5" /></Svg>
}

function Chevron(){
  return <Svg w={10} h={7}><path d="M1 6L5 1.5L9 6" stroke="#444" strokeWidth="2" /></Svg>
}

function Browser(){
  return (
      <aside className="flex w-[480px] shrink-0 flex-col border-r-4 border-[#c4c4c4] bg-[#efefef] pl-px">
          <div className="flex h-[31px] shrink-0 items-center justify-between pr-[7px] pl-[6px] text-[18px] whitespace-nowrap">
              プロジェクト ブラウザ - 二上Exercise0307(2015)
              <Tool label="閉じる"><CloseX /></Tool>
          </div>
          <div className="flex min-h-0 flex-1">
              <ul className="min-w-0 flex-1 overflow-hidden bg-white pt-px">
                  {TREE.map((r,i) => <TreeRow key={i} row={r} />)}
              </ul>
              <div className="flex w-[25px] shrink-0 flex-col">
                  <Tool label="上へ" className="h-[27px]"><Chevron /></Tool>
                  <div className="h-[394px] bg-[#c9c9c9]" />
              </div>
              <div className="w-[3px] bg-[#efefef]" />
          </div>
      </aside>
  )
}

/* ---------- site map ---------- */

// [path, width of the roadway]
const ROADS = [
  ["M52 396L180 466L290 540L420 588L530 622L790 702L900 737L1040 778", 62],
  ["M1040 778L1290 846L1540 922L1720 976", 44],
  ["M297 40L84 388", 21],
  ["M635 30L440 360L380 440L300 510", 34],
  ["M650 40L688 62L540 600", 22],
  ["M690 62L945 124", 14],
  ["M978 40L962 130L812 700", 24],
  ["M520 640L425 1010L345 1320", 30],
  ["M798 730L648 1320", 30],
  ["M262 560L232 620L110 1110L62 1310", 24],
  ["M40 1118L130 1136L360 1196L645 1284", 16],
  ["M1043 790L908 1320", 58],
  ["M1000 1082L1440 1200L1720 1290", 38],
  ["M1355 1200L1325 1320", 36],
  ["M1500 925L1430 1195", 28],
  ["M1112 460L1138 520L1132 575L1075 770", 20],
  ["M1130 200L1225 252L1360 288L1720 398", 22],
  ["M1230 252L1216 340L1220 400L1288 530", 20],
  ["M1478 40L1382 285L1325 450L1295 540L1225 585", 24],
  ["M1330 440L1720 556", 18],
  ["M1110 450L1150 530L1225 588L1310 648L1445 715L1490 688L1720 768", 18],
  ["M1445 715L1408 860", 26],
  ["M1325 48L1460 88", 6],
  ["M1700 300L1670 390", 14],
];

const BLUES = [
  ["M602 48L440 325L377 410L340 445L272 494", 12],
  ["M652 55L458 370L388 465L318 520", 14],
  ["M963 48L946 106", 8],
  ["M935 145L793 670", 9],
  ["M194 850L122 1120", 18],
  ["M114 1148L72 1310", 16],
  ["M1115 48C1100 80 1120 105 1145 125C1175 145 1180 155 1150 178C1100 210 1085 220 1085 240C1090 265 1140 260 1160 280C1175 305 1150 325 1120 330C1080 335 1075 370 1085 400L1120 440", 8],
];

const HOUSES = [
  "610,180 635,180 633,215 625,262 585,252 600,210",
  "558,280 600,290 588,333 548,320",
  "522,330 590,350 583,388 515,368",
  "583,542 793,600 783,638 573,578",
  "52,765 77,772 68,808 52,805",
  "52,810 100,820 80,898 52,890",
  "52,928 130,950 122,982 52,960",
  "488,974 580,1000 570,1038 478,1012",
  "450,1070 650,1128 640,1168 440,1112",
  "650,1072 672,1080 668,1092 650,1087",
  "443,1016 459,1020 457,1034 442,1030",
  "425,1143 462,1155 452,1208 418,1196",
  "478,1160 515,1172 505,1215 468,1200",
  "530,1175 572,1188 560,1235 524,1222",
  "598,1192 634,1205 620,1250 588,1240",
  "752,1022 907,1063 880,1160 848,1150 843,1162 720,1120",
  "705,1150 730,1160 722,1188 700,1180",
  "822,1180 876,1196 866,1253 810,1240",
  "700,1228 852,1272 845,1310 690,1310 672,1282",
];

const EAST_HOUSES = [
  "160,48 230,48 222,68 160,55",
  "160,70 265,95 252,145 150,115",
  "180,130 240,150 235,178 165,162",
  "130,135 160,145 152,170 125,160",
  "140,175 215,195 208,245 135,228",
  "315,48 370,48 365,68",
  "385,48 420,50 415,78 380,68",
  "420,58 465,68 460,90 418,80",
  "485,62 518,75 512,110 478,98",
  "535,80 590,95 580,130 530,115",
  "345,85 412,98 405,130 432,140 425,205 437,210 430,235 368,220 380,160 335,125",
  "495,130 578,155 565,188 530,215 495,222 465,208",
  "680,102 705,112 700,125 735,165 690,155 672,148",
  "715,190 782,210 772,250 708,230",
  "800,215 854,232 854,290 765,270 775,240 805,245",
  "830,135 854,130 854,180 825,170",
  "585,235 675,262 665,290 655,300 568,272",
  "780,285 812,295 805,350 750,340",
  "410,270 518,300 505,335 400,320",
  "400,325 490,345 485,400 390,380",
  "430,385 485,400 475,430 420,420",
  "420,430 465,440 450,490 410,460",
  "540,315 600,330 590,385 535,370",
  "600,340 625,350 612,400 590,395",
  "635,345 695,365 690,415 625,400",
  "700,370 725,375 720,420 705,415",
  "735,370 783,385 770,447 730,435",
  "520,390 645,425 638,445 610,440 600,460 508,425",
  "690,420 720,430 705,490 676,480",
  "738,448 766,455 752,503 726,497",
  "815,405 830,410 838,480 780,465",
  "500,480 530,490 515,550 476,540",
  "545,490 578,495 572,580 555,590 525,580",
  "605,500 655,520 640,560 630,590 590,580",
  "640,525 682,540 670,600 630,580",
  "695,530 725,540 705,615 680,600",
  "720,565 755,575 745,615 720,605",
  "758,575 825,570 810,643 795,615",
  "580,592 650,610 640,635 605,655 600,625 575,615",
  "672,620 722,640 708,675 658,655",
  "740,645 785,665 765,720 720,680",
  "790,670 838,682 820,715 775,705",
  "840,580 854,585 854,650 835,640",
  "460,562 540,615 595,665 572,690 490,635",
  "430,575 475,620 460,642 415,605",
  "665,730 755,750 745,797 662,770",
  "622,815 710,835 700,882 612,858",
  "775,865 854,885 842,930 765,905",
  "825,790 854,785 854,840 820,830",
  "540,715 570,725 555,790 518,775",
  "430,760 468,775 455,812 415,800",
  "475,778 505,787 498,825 468,815",
  "512,800 552,812 545,850 505,838",
  "250,818 300,828 290,875 240,862",
  "308,840 342,850 332,892 300,882",
  "352,857 422,878 412,918 343,900",
  "445,888 507,907 488,980 428,962",
  "680,945 755,965 725,1078 655,1058",
  "765,1025 850,1048 840,1105 753,1085",
  "640,1075 725,1098 715,1150 632,1127",
  "755,1100 803,1115 780,1210 730,1195",
  "805,1130 854,1145 854,1205 792,1188",
  "168,1120 220,1137 208,1185 160,1168",
  "290,1160 318,1168 305,1212 283,1200",
  "325,1165 370,1180 345,1277 302,1262",
  "125,1265 200,1287 195,1310 115,1310",
  "540,1240 665,1275 660,1310 522,1310",
  "735,1290 790,1310 735,1310",
  "275,345 348,328 342,368 262,376",
  "298,415 355,405 362,440 300,450",
  "322,460 392,480 388,515 320,500",
  "360,510 400,535 375,565 355,540",
  "205,362 223,368 212,413 195,408",
  "192,415 262,445 245,490 175,485",
  "160,548 240,568 230,608 150,588",
  "228,495 245,500 240,512 224,508",
];

const LOTS = [
  ["108-3",552,245],["108-2",525,362],["3",805,1112],["4",825,1230],["5",815,805],["164-6",378,1172],["164-4",485,1200],["164-3",580,1226],
  ["131-1",1018,162],["768",1228,173],["764-3",1315,187],["769-7",1255,80],["769-5",1367,106],["764-11",1420,278],["754-15",1247,322],
  ["754-2",1255,372],["754-4",1375,356],["754",1475,374],["546-9",1512,428],["544-2",1590,342],["546-7",1620,462],["754-7",1265,456],
  ["761-1",1115,363],["760",1148,430],["133-3",1033,468],["758-1",1190,532],["754-9",1360,558],["551-1",1488,590],["546-4",1587,608],
  ["758",1330,630],["551-2",1623,700],["277-2",1348,758],["277-3",1248,794],["338-3",1076,865],["244",1318,948],["237",1005,1164],
  ["247",1658,1197],["276",1662,832],["537",1655,119],["50 m",1615,1296],
];

function SiteMap({ className, children }){
  return (
      <svg viewBox="52 48 1642 1262" preserveAspectRatio="none" className={className} role="img" aria-label="付近見取図">
          <rect x="52" y="48" width="1642" height="1262" fill="#ebf4df" />
          <g fill="#ded8cc" stroke="#b3ada0" strokeWidth="2">
              {HOUSES.map(p => <polygon key={p} points={p} />)}
              <g transform="translate(840 0)">{EAST_HOUSES.map(p => <polygon key={p} points={p} />)}</g>
          </g>
          <g fill="none" stroke="#85887f" strokeLinejoin="round">
              {ROADS.map(([d,w]) => <path key={d} d={d} strokeWidth={w + 5} />)}
          </g>
          <g fill="none" stroke="#fff" strokeLinejoin="round">
              {ROADS.map(([d,w]) => <path key={d} d={d} strokeWidth={w} />)}
          </g>
          <path d="M628 48L442 345L380 428L292 500M640 48L450 355L386 442L305 508" fill="none" stroke="#9a9c98" strokeWidth="2" />
          <polygon points="797,825 888,850 908,773 1008,800 943,1043 750,995" fill="#a6cb75" />
          <polygon points="822,768 860,780 850,815 815,803" fill="#ded8cc" stroke="#b3ada0" strokeWidth="2" />
          <path d="M785 880L900 912C960 920 980 905 984 880" fill="none" stroke="#6e9a48" strokeWidth="2" />
          <g fill="none" stroke="#0c56a4">
              {BLUES.map(([d,w]) => <path key={d} d={d} strokeWidth={w} />)}
          </g>
          <polygon points="190,537 225,537 248,550 178,558" fill="#0c56a4" />
          <g fontSize="25" fill="#57524c" fontFamily="Noto Sans">
              {LOTS.map(([t,x,y]) => <text key={t + x} x={x} y={y}>{t}</text>)}
          </g>
          <path d="M1357 1286H1608M1357 1276V1298M1608 1276V1298" stroke="#222" strokeWidth="4" />
          <path d="M84 413V426M78 426H90M949 1219V1232M943 1232H955" stroke="#333" strokeWidth="3" />
          <circle cx="84" cy="407" r="7" fill="#fff" stroke="#333" strokeWidth="3" />
          <circle cx="949" cy="1212" r="7" fill="#fff" stroke="#333" strokeWidth="3" />
          {children}
      </svg>
  )
}

function Grip({ className }){
  return <span className={clsx("absolute h-[15px] w-[15px] rounded-full border-2 border-[#64779c] bg-[#7cabf0]", className)} />
}

function NavBar(){
  return (
      <div className="absolute top-[4px] right-0 flex h-[153px] w-[45px] flex-col items-center rounded-md border-2 border-[#cfcfcf] bg-[#f3f3f3]">
          <Tool label="閉じる" className="mt-px mr-[2px] self-end"><Svg w={12} h={12}><circle cx="6" cy="6" r="5" stroke="#a5a5a5" strokeWidth="1.5" /><path d="M4 4L8 8M8 4L4 8" stroke="#999" strokeWidth="1.5" /></Svg></Tool>
          <Tool label="ステアリングホイール" className="mt-[10px]">
              <Svg w={36} h={34}>
                  <path d="M14 2H27V15C27 33 1 32 1 15C1 8 6 2 14 2Z" fill="#ededed" stroke="#a9a9a9" strokeWidth="2" />
                  <circle cx="14" cy="14" r="6" stroke="#a9a9a9" strokeWidth="2" /><path d="M10 19L5 25" stroke="#a9a9a9" strokeWidth="2" />
                  <text x="17" y="32" fontSize="14" fontWeight="700" fill="#7fa3cf" fontFamily="Roboto">2D</text>
              </Svg>
          </Tool>
          <Tool label="ホイールメニュー" className="mt-[6px]"><Svg w={8} h={5}><path d="M0 0H8L4 5Z" fill="#999" /></Svg></Tool>
          <span className="mt-[7px] h-px w-[37px] bg-[#cfcfcf]" />
          <Tool label="ズーム" className="mt-[10px]">
              <Svg w={24} h={24}>
                  <rect x="1" y="1" width="15" height="15" fill="#b5d3a2" stroke="#a6c293" />
                  <circle cx="16" cy="16" r="5" fill="#eee" stroke="#a0a0a0" strokeWidth="2" /><path d="M19 19L23 23" stroke="#a0a0a0" strokeWidth="2.5" />
              </Svg>
          </Tool>
          <Tool label="ズームメニュー" className="mt-3"><Svg w={8} h={5}><path d="M0 0H8L4 5Z" fill="#999" /></Svg></Tool>
          <Tool label="オプション" className="mt-2 mr-[2px] self-end"><Svg w={12} h={12}><circle cx="6" cy="6" r="5" stroke="#a5a5a5" strokeWidth="1.5" /><path d="M3 6H9" stroke="#999" strokeWidth="2" /></Svg></Tool>
      </div>
  )
}

function Canvas(){
  return (
      <div className="relative min-w-0 flex-1 overflow-hidden bg-white">
          <p className="absolute top-1 left-[11px] text-[61px] leading-[84px] font-medium whitespace-nowrap text-[#fb1206] [font-feature-settings:normal]">青丸をドラッグしてサイズを調整します</p>

          <div className="absolute top-[152px] left-[207px] h-[422px] w-[548px] border border-[#f0aaa0]">
              <SiteMap className="h-full w-full">
                  <path d="M52 48L1694 1310M52 1310L1694 48" stroke="#ee9a90" strokeWidth="2.5" strokeDasharray="14 12" />
              </SiteMap>
              <Grip className="-top-2 -left-2" />
              <Grip className="-top-2 -right-2" />
              <Grip className="-bottom-2 -left-2" />
              <Grip className="-right-2 -bottom-2" />
          </div>

          <div className="absolute top-[99px] left-[702px] h-[108px] w-[108px] rounded-full border-[9px] border-[#fb1206]" />
          <span className="absolute top-[106px] left-[828px]">
              <Svg w={58} h={64}><path d="M53 2C54 30 38 50 6 50M18 38L5 50L20 61" stroke="#fb1a10" strokeWidth="2" strokeLinecap="round" /></Svg>
          </span>
          <span className="absolute top-[362px] left-[774px] h-7 w-7 rounded-full bg-[#fcfc6a]" />

          <div className="absolute top-[634px] left-[770px] h-[198px] w-[257px]">
              <SiteMap className="h-full w-full">
                  <rect x="804" y="750" width="94" height="92" fill="#f6f3e6" stroke="#ee6a50" strokeWidth="6" />
                  <polygon points="826,775 862,780 856,812 822,806" fill="#ded8cc" stroke="#999" strokeWidth="3" />
              </SiteMap>
          </div>
          <span className="absolute top-[624px] left-[892px]">
              <Svg w={48} h={122}><path d="M2 119L39 2H47" stroke="#8b8b8b" /><path d="M0 112L2 120L6 114" stroke="#555" /></Svg>
          </span>
          <span className="absolute top-[618px] left-[942px] text-[9px] leading-3 whitespace-nowrap">計画予定地</span>
          <NavBar />
      </div>
  )
}

function DrawingArea(){
  return (
      <main className="flex min-w-0 flex-1 flex-col">
          <div className="flex h-[31px] shrink-0 items-center bg-[#cbcbcb] pr-[10px]">
              <div className="flex h-full w-[201px] items-center bg-white pr-2 pl-[7px]">
                  <Svg w={26} h={26}>
                      <path d="M1 1H16L20 6V25H1Z" fill="#c6cbd4" stroke={MID} strokeWidth="1.5" />
                      <path d="M3 13H22L25 19L22 22H3Z" fill="#eef0f3" stroke={MID} strokeWidth="1.8" /><path d="M5 18H20" stroke={MID} strokeWidth="2" />
                  </Svg>
                  <button type="button" className="ml-3 text-[19px] whitespace-nowrap text-black">付近見取図</button>
                  <Tool label="閉じる" className="ml-auto"><CloseX /></Tool>
              </div>
              <Tool label="タブ一覧" className="ml-auto"><MenuDownIcon /></Tool>
          </div>
          <div className="flex min-h-0 flex-1">
              <Canvas />
              <div className="flex w-[26px] shrink-0 flex-col bg-[#efefef]">
                  <Tool label="上へ" className="mb-[434px] h-9"><Chevron /></Tool>
                  <div className="h-[26px] bg-[#cbcbcb]" />
              </div>
              <div className="w-1 shrink-0" />
          </div>
      </main>
  )
}

/* ---------- properties ---------- */

const cell = "h-[31px] border-b border-[#d9d9d9] p-0 whitespace-nowrap";

function Field({ id, label, children }){
  return (
      <tr>
          <td className={clsx(cell, "w-[188px] border-r")}><label htmlFor={id} className="ml-3">{label}</label></td>
          <td className={cell}>{children}</td>
      </tr>
  )
}

function GroupRow({ children }){
  return <tr><th colSpan={2} className="h-[31px] bg-[#dadada] p-0 pl-1 text-left font-light">{children}</th></tr>
}

function Properties(){
  var [size,setSize] = useState({ w:"7000.0", h:"5400.0", sx:"20.000", sy:"20.000" });
  const input = (id,k,cls) => <input id={id} value={size[k]} onChange={e => setSize({ ...size, [k]:e.target.value })} className={clsx("block h-7 w-[116px] bg-transparent px-[2px] outline-none", cls)} />;

  return (
      <aside className="w-[207px] shrink-0 overflow-hidden border-l-4 border-[#bdbdbd] bg-white text-[18px]">
          <div className="w-[310px]">
              <h2 className="h-8 border-b-2 border-[#7f7f7f] bg-[#efefef] pl-[5px] leading-[31px]">プロパティ</h2>
              <div className="flex h-[115px] items-center gap-[7px] border-b-2 border-[#7f7f7f] bg-[#efefef] pl-[6px]">
                  <div className="h-[105px] w-[104px] border border-[#c9c9c9]" />
                  <div className="leading-[25px] whitespace-nowrap">ラスター イメージ<br />附近見取図</div>
              </div>
              <div className="h-8 border border-[#c6c6c6] bg-[#e0e0e0] pl-1 leading-8">ラスター イメージ (1)</div>
              <table className="w-[308px] table-fixed border-collapse leading-7">
                  <colgroup><col className="w-[188px]" /><col /></colgroup>
                  <tbody>
                      <GroupRow>寸法</GroupRow>
                      <Field id="p-w" label="幅">{input("p-w", "w", "border border-[#777]")}</Field>
                      <Field id="p-h" label="高さ">{input("p-h", "h")}</Field>
                      <Field id="p-sx" label="水平スケール">{input("p-sx", "sx")}</Field>
                      <Field id="p-sy" label="垂直スケール">{input("p-sy", "sy")}</Field>
                      <Field id="p-lock" label="比率を固定">
                          <span className="relative ml-[2px] flex h-5 w-5">
                              <input id="p-lock" type="checkbox" defaultChecked className="h-5 w-5 appearance-none border-2 border-[#666] bg-white" />
                              <span className="pointer-events-none absolute top-[5px] left-[4px]"><Svg w={12} h={10}><path d="M1 4L5 8L11 1" stroke="#333" strokeWidth="1.5" /></Svg></span>
                          </span>
                      </Field>
                      <GroupRow>その他</GroupRow>
                      <Field id="p-layer" label="レイヤを描画">
                          <select id="p-layer" className="block h-7 w-[116px] appearance-none bg-transparent px-[2px] outline-none"><option>背景</option><option>前景</option></select>
                      </Field>
                  </tbody>
              </table>
          </div>
      </aside>
  )
}

export default function App(){
  return (
      <div className="flex h-screen flex-col overflow-hidden bg-white pt-[5px] pl-[10px] font-['Noto_Sans_CJK_JP','Noto_Sans',sans-serif] font-light text-[#333] [font-feature-settings:'palt']">
          <TitleBar />
          <Tabs />
          <Ribbon />
          <OptionsBar />
          <div className="flex min-h-0 flex-1">
              <Browser />
              <DrawingArea />
              <Properties />
          </div>
      </div>
  )
}
